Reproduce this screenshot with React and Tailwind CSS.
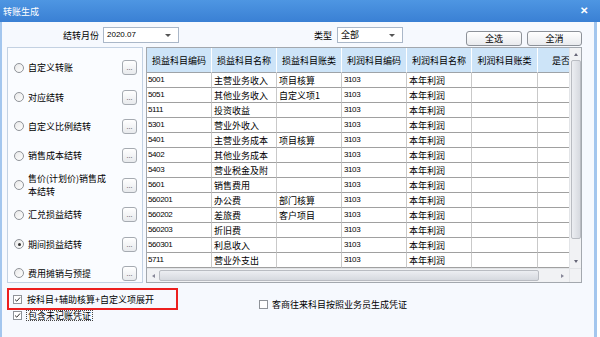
import React from 'react';

const FONT = { fontFamily: '"Noto Sans CJK SC", "Liberation Sans", sans-serif' };

const options = [
  { label: '自定义转账' },
  { label: '对应结转' },
  { label: '自定义比例结转' },
  { label: '销售成本结转' },
  { label: ['售价(计划价)销售成', '本结转'] },
  { label: '汇兑损益结转' },
  { label: '期间损益结转', checked: true },
  { label: '费用摊销与预提' },
];

const headers = ['损益科目编码', '损益科目名称', '损益科目账类', '利润科目编码', '利润科目名称', '利润科目账类', '是否结转'];

const rows = [
  ['5001', '主营业务收入', '项目核算'],
  ['5051', '其他业务收入', '自定义项1'],
  ['5111', '投资收益', ''],
  ['5301', '营业外收入', ''],
  ['5401', '主营业务成本', '项目核算'],
  ['5402', '其他业务成本', ''],
  ['5403', '营业税金及附', ''],
  ['5601', '销售费用', ''],
  ['560201', '办公费', '部门核算'],
  ['560202', '差旅费', '客户项目'],
  ['560203', '折旧费', ''],
  ['560301', '利息收入', ''],
  ['5711', '营业外支出', ''],
];

const Select = ({ value, className }) => (
  <div className={`h-[16px] bg-white border border-[#aab7c8] flex items-center justify-between pl-[3px] pr-[7px] ${className}`}>
    <span className="text-[8px] font-['Liberation_Sans'] text-black">{value}</span>
    <span className="w-0 h-0 border-l-[3px] border-r-[3px] border-t-[3px] border-l-transparent border-r-transparent border-t-[#555]" />
  </div>
);

const Btn = ({ children, className }) => (
  <div className={`h-[15px] rounded-[3px] border border-[#8d9299] bg-gradient-to-b from-white to-[#e9ebee] flex items-center justify-center text-[9px] leading-none text-black ${className}`}>
    {children}
  </div>
);

const Radio = ({ checked }) => (
  <span className="w-[10px] h-[10px] shrink-0 rounded-full border border-[#8f9399] bg-gradient-to-br from-[#e8e8e8] to-white flex items-center justify-center">
    {checked && <span className="w-[3px] h-[3px] rounded-full bg-[#333]" />}
  </span>
);

const Check = ({ checked = true }) => (
  <span className="w-[9px] h-[9px] shrink-0 border border-[#8f9399] bg-white flex items-center justify-center">
    {checked && (
      <svg width="7" height="7" viewBox="0 0 7 7">
        <path d="M1 3.5 L2.8 5.2 L6 1.5" fill="none" stroke="#333" strokeWidth="1" />
      </svg>
    )}
  </span>
);

export default function App() {
  return (
    <div className="w-[600px] h-[337px] bg-white overflow-hidden text-black" style={FONT}>
      {/* title bar */}
      <div className="h-[22px] w-[600px] bg-gradient-to-b from-[#4e96e2] to-[#3a80d4] flex items-center justify-between pl-[3px] pr-[12px]">
        <span className="text-[9px] text-white leading-none">转账生成</span>
        <span className="text-[10px] font-bold text-white leading-none font-['Liberation_Sans']">✕</span>
      </div>

      <div className="w-[597px] h-[315px] bg-[#f6f9fe] border-l-2 border-r-[3px] border-[#a3c6ee] flex flex-col">
        {/* top row */}
        <div className="h-[25px] pt-[5px] flex items-start text-[9px]">
          <span className="ml-[61px] w-[36px] h-[16px] flex items-center leading-none">结转月份</span>
          <Select value="2020.07" className="ml-[4px] w-[76px]" />
          <span className="ml-[135px] w-[18px] h-[16px] flex items-center leading-none">类型</span>
          <Select value="全部" className="ml-[5px] w-[66px] [&>span:first-child]:text-[9px] [&>span:first-child]:font-['Noto_Sans_CJK_SC']" />
          <Btn className="ml-[63px] mt-[4px] w-[56px]">全选</Btn>
          <Btn className="ml-[5px] mt-[4px] w-[55px]">全消</Btn>
        </div>

        {/* main area */}
        <div className="flex ml-[5px] gap-[3px]">
          {/* left panel */}
          <div className="w-[136px] h-[236px] border border-[#c3d1e2] bg-[#fafcff] pt-[5px]">
            {options.map((o, i) => (
              <div key={i} className="h-[29.4px] flex items-center">
                <span className="ml-[6px]"><Radio checked={o.checked} /></span>
                <span className="ml-[4px] flex-1 text-[9px] leading-[13px]">
                  {Array.isArray(o.label) ? (
                    <>
                      {o.label[0]}
                      <br />
                      {o.label[1]}
                    </>
                  ) : (
                    o.label
                  )}
                </span>
                <span className="w-[15px] h-[15px] mr-[5px] rounded-[3px] border border-[#a5aab1] bg-gradient-to-b from-white to-[#e8eaed] flex items-end justify-center pb-[3px] text-[7px] leading-none text-[#333] font-['Liberation_Sans']">
                  ...
                </span>
              </div>
            ))}
          </div>

          {/* table */}
          <div className="w-[436px] h-[236px] border border-[#a3a8ae] bg-white flex flex-col">
            <div className="flex h-[220px]">
              <div className="w-[422px] overflow-hidden">
                <div className="grid grid-cols-[65px_65px_65px_65px_65px_66px_65px] w-[456px]">
                  {headers.map((h) => (
                    <div key={h} className="h-[25px] bg-[#cde4f8] border-r border-white border-b border-b-[#9ea3a8] flex items-center justify-center text-[9px] leading-none whitespace-nowrap overflow-hidden">
                      {h}
                    </div>
                  ))}
                  {rows.map((r) => (
                    <React.Fragment key={r[0]}>
                      <div className="h-[15px] border-r border-[#c9c9c9] border-b border-b-[#a0a0a0] pl-[1px] flex items-center text-[8px] font-['Liberation_Sans'] tracking-[-0.4px] leading-none">{r[0]}</div>
                      <div className="h-[15px] border-r border-[#c9c9c9] border-b border-b-[#a0a0a0] pl-[2px] flex items-center text-[9px] leading-none whitespace-nowrap">{r[1]}</div>
                      <div className="h-[15px] border-r border-[#c9c9c9] border-b border-b-[#a0a0a0] pl-[2px] flex items-center text-[9px] leading-none whitespace-nowrap">{r[2]}</div>
                      <div className="h-[15px] border-r border-[#c9c9c9] border-b border-b-[#a0a0a0] pl-[2px] flex items-center text-[8px] font-['Liberation_Sans'] tracking-[-0.4px] leading-none">3103</div>
                      <div className="h-[15px] border-r border-[#c9c9c9] border-b border-b-[#a0a0a0] pl-[2px] flex items-center text-[9px] leading-none">本年利润</div>
                      <div className="h-[15px] border-r border-[#c9c9c9] border-b border-b-[#a0a0a0]" />
                      <div className="h-[15px] border-r border-[#c9c9c9] border-b border-b-[#a0a0a0]" />
                    </React.Fragment>
                  ))}
                </div>
              </div>
              {/* vertical scrollbar */}
              <div className="w-[12px] h-[220px] bg-[#f1f2f4] border-l border-[#e2e4e7] flex flex-col items-center">
                <div className="h-[12px] flex items-center justify-center">
                  <span className="w-0 h-0 border-l-[2.5px] border-r-[2.5px] border-b-[3px] border-l-transparent border-r-transparent border-b-[#667]" />
                </div>
                <div className="w-[10px] h-[179px] rounded-[2px] border border-[#b9bcc2] bg-gradient-to-r from-[#eceef2] to-[#d6d9df]" />
                <div className="flex-1 flex items-end pb-[5px]">
                  <span className="w-0 h-0 border-l-[2.5px] border-r-[2.5px] border-t-[3px] border-l-transparent border-r-transparent border-t-[#667]" />
                </div>
              </div>
            </div>
            {/* horizontal scrollbar */}
            <div className="flex h-[14px]">
              <div className="w-[422px] bg-[#f1f2f4] border-t border-[#e2e4e7] flex items-center">
                <div className="w-[12px] flex items-center justify-center">
                  <span className="w-0 h-0 border-t-[2.5px] border-b-[2.5px] border-r-[3px] border-t-transparent border-b-transparent border-r-[#889]" />
                </div>
                <div className="w-[380px] h-[11px] rounded-[2px] border border-[#b9bcc2] bg-gradient-to-b from-[#eceef2] to-[#d6d9df]" />
                <div className="flex-1 flex items-center justify-end pr-[5px]">
                  <span className="w-0 h-0 border-t-[2.5px] border-b-[2.5px] border-l-[3px] border-t-transparent border-b-transparent border-l-[#889]" />
                </div>
              </div>
              <div className="w-[12px] bg-[#f1f2f4] border-t border-l border-[#e2e4e7]" />
            </div>
          </div>
        </div>

        {/* bottom options */}
        <div className="flex mt-[5px] text-[9px]">
          <div className="ml-[5px] w-[171px] flex flex-col">
            <div className="h-[22px] border-2 border-[#ec1f1f] flex items-center pl-[4px]">
              <Check />
              <span className="ml-[5px] leading-none whitespace-nowrap">按科目+辅助核算+自定义项展开</span>
            </div>
            <div className="h-[11px] flex items-center pl-[6px]">
              <Check />
              <span className="ml-[4px] px-[1px] border border-dotted border-[#444] leading-none whitespace-nowrap">包含未记账凭证</span>
            </div>
          </div>
          <div className="ml-[81px] mt-[12px] flex items-center h-[9px]">
            <Check checked={false} />
            <span className="ml-[4px] leading-none whitespace-nowrap">客商往来科目按照业务员生成凭证</span>
          </div>
        </div>
      </div>
    </div>
  );
}
